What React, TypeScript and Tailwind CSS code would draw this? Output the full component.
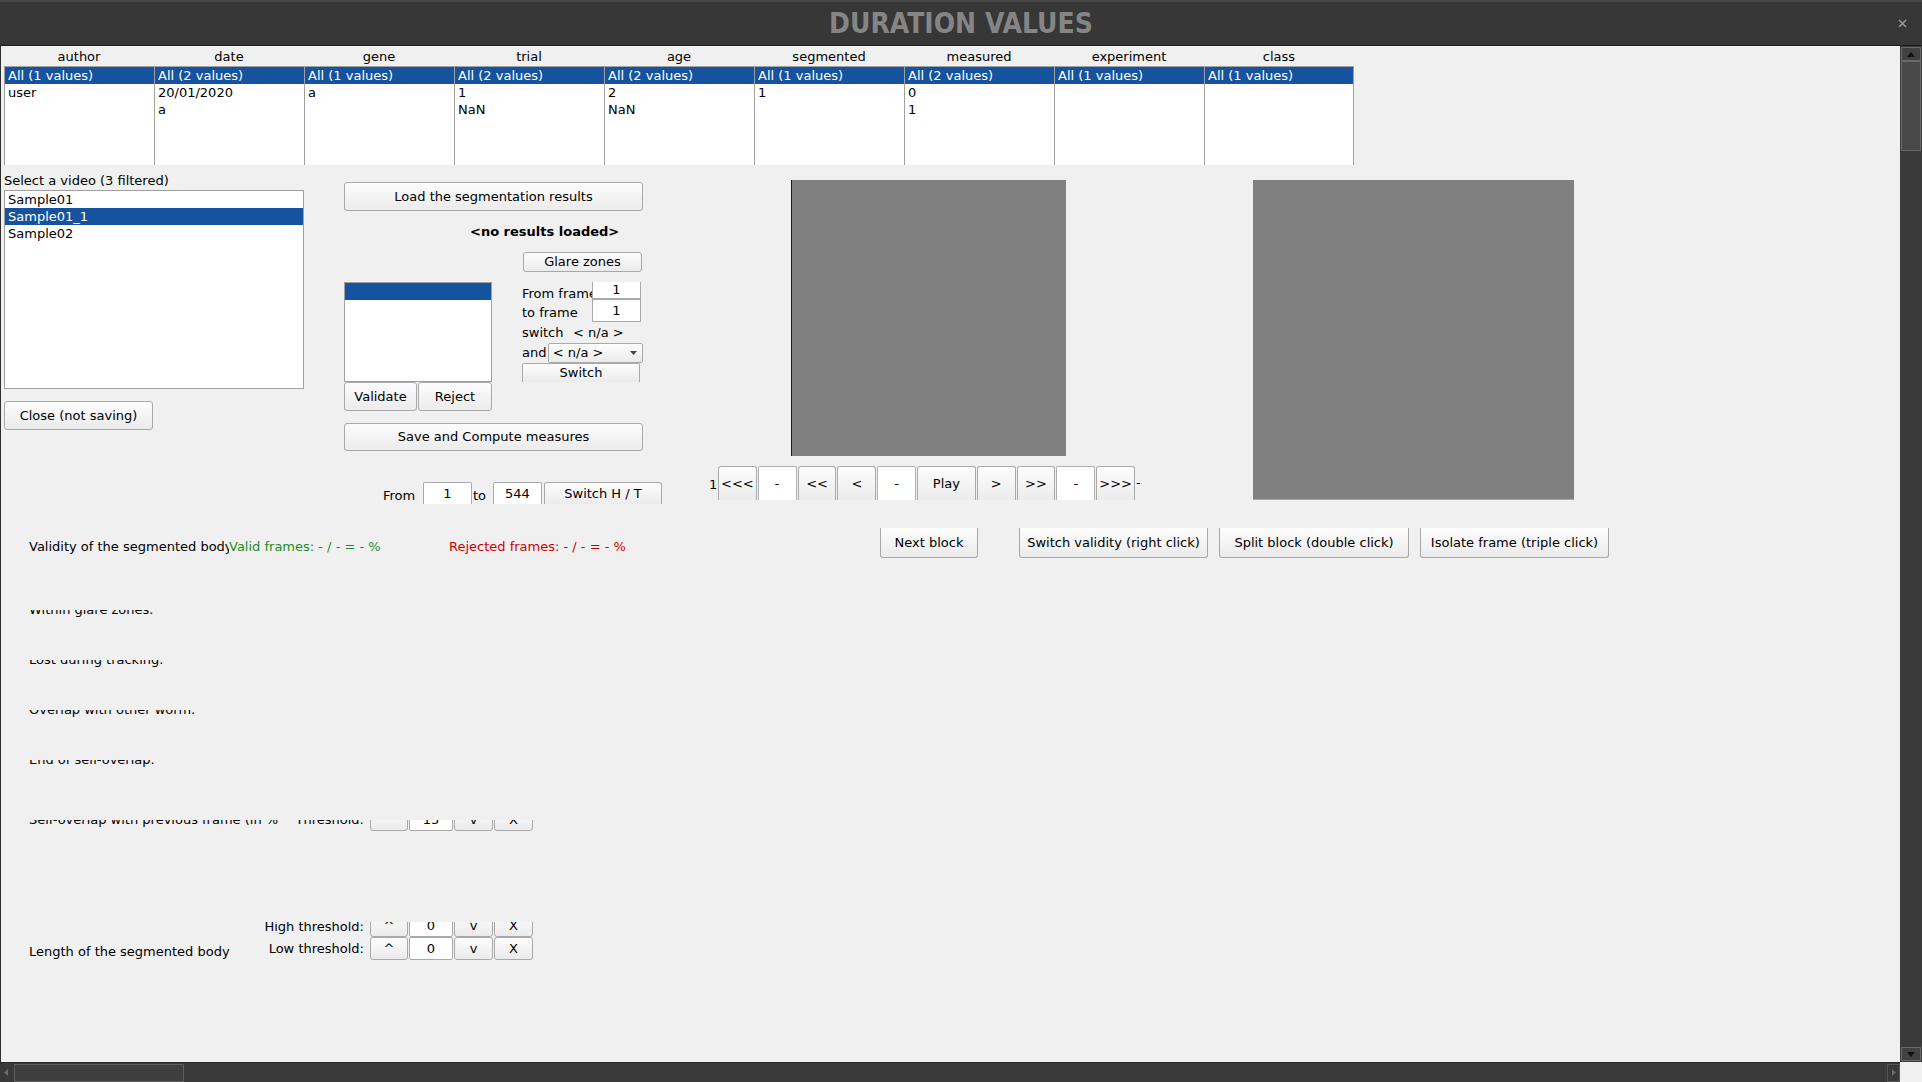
import React from "react";

const FACE = "flex items-center justify-center border-[#a9a9a9] bg-linear-to-b from-[#fdfdfd] to-[#ebebeb] text-black whitespace-nowrap";
const BTN = `${FACE} border`;

function Btn({ children, className = "" }: { children?: React.ReactNode; className?: string }) {
  return <div className={`${BTN} rounded-[3px] ${className}`}>{children}</div>;
}

function Field({ children, className = "" }: { children?: React.ReactNode; className?: string }) {
  return (
    <div className={`flex items-center justify-center bg-white border-[#a9a9a9] whitespace-nowrap ${className}`}>
      {children}
    </div>
  );
}

const cols = [
  { name: "author", n: 1, vals: ["user"] },
  { name: "date", n: 2, vals: ["20/01/2020", "a"] },
  { name: "gene", n: 1, vals: ["a"] },
  { name: "trial", n: 2, vals: ["1", "NaN"] },
  { name: "age", n: 2, vals: ["2", "NaN"] },
  { name: "segmented", n: 1, vals: ["1"] },
  { name: "measured", n: 2, vals: ["0", "1"] },
  { name: "experiment", n: 1, vals: [] as string[] },
  { name: "class", n: 1, vals: [] as string[] },
];

function TitleBar() {
  return (
    <div className="h-[46px] shrink-0 bg-[#373737] border-t-2 border-t-[#474747] border-b border-b-[#1c1c1c] flex items-center">
      <div className="w-[40px]" />
      <div className="flex-1 text-center font-['DejaVu_Sans_Condensed','Noto_Sans',sans-serif] font-bold text-[28px] leading-[30px] text-[#858585]">
        DURATION VALUES
      </div>
      <div className="w-[40px] flex items-center justify-center">
        <svg width="9" height="9" viewBox="0 0 9 9">
          <path d="M1 1L8 8M8 1L1 8" stroke="#9a9a9a" strokeWidth="1.5" />
        </svg>
      </div>
    </div>
  );
}

function FilterTable() {
  return (
    <div className="flex ml-[3px]">
      {cols.map((c, i) => (
        <div key={c.name} className="w-[150px] flex flex-col">
          <div className="h-[20px] leading-[20px] pt-[1px] text-center">{c.name}</div>
          <div
            className={`h-[99px] bg-white border-t border-l border-[#a0a0a0] ${
              i === cols.length - 1 ? "border-r" : ""
            }`}
          >
            <div className="h-[17px] leading-[17px] pl-[3px] bg-[#15539e] text-white whitespace-nowrap">
              All ({c.n} values)
            </div>
            {c.vals.map((v) => (
              <div key={v} className="h-[17px] leading-[17px] pl-[3px] whitespace-nowrap">
                {v}
              </div>
            ))}
          </div>
        </div>
      ))}
    </div>
  );
}

function NavBtn({ children, white = false, w = "w-[39px]" }: { children: React.ReactNode; white?: boolean; w?: string }) {
  return white ? (
    <div className={`${w} h-[34px] flex items-center justify-center bg-white border-x border-t border-[#b0b0b0] rounded-t-[2px]`}>
      {children}
    </div>
  ) : (
    <div className={`${FACE} border-x border-t ${w} h-[34px] rounded-t-[3px]`}>{children}</div>
  );
}

function SectionB() {
  return (
    <div className="flex items-start mt-[5px] shrink-0">
      {/* left column */}
      <div className="ml-[3px] w-[300px] flex flex-col">
        <div className="h-[20px] leading-[20px] pt-[1px] whitespace-nowrap">Select a video (3 filtered)</div>
        <div className="h-[199px] bg-white border border-[#a0a0a0]">
          <div className="h-[17px] leading-[17px] pl-[3px]">Sample01</div>
          <div className="h-[17px] leading-[17px] pl-[3px] bg-[#15539e] text-white">Sample01_1</div>
          <div className="h-[17px] leading-[17px] pl-[3px]">Sample02</div>
        </div>
        <Btn className="mt-[12px] w-[149px] h-[29px]">Close (not saving)</Btn>
      </div>

      {/* middle column */}
      <div className="ml-[40px] w-[319px] flex flex-col">
        <Btn className="mt-[12px] w-[299px] h-[29px]">Load the segmentation results</Btn>
        <div className="mt-[13px] h-[16px] leading-[16px] pl-[126px] font-bold whitespace-nowrap">
          &lt;no results loaded&gt;
        </div>
        <Btn className="mt-[12px] ml-[179px] w-[119px] h-[20px]">Glare zones</Btn>
        <div className="mt-[10px] flex items-start">
          <div className="w-[148px] flex flex-col">
            <div className="h-[100px] bg-white border border-[#a0a0a0]">
              <div className="h-[17px] bg-[#15539e]" />
            </div>
            <div className="flex h-[29px]">
              <Btn className="w-[73px] h-[29px]">Validate</Btn>
              <Btn className="ml-[1px] w-[74px] h-[29px]">Reject</Btn>
            </div>
          </div>
          <div className="ml-[30px] w-[121px] flex flex-col">
            <div className="h-[17px] flex items-center">
              <div className="w-[70px] overflow-hidden whitespace-nowrap leading-[17px] pt-[5px]">From frame</div>
              <Field className="w-[49px] h-[17px] border-x border-b">1</Field>
            </div>
            <div className="h-[23px] flex items-center">
              <div className="w-[70px] overflow-hidden whitespace-nowrap pt-[4px]">to frame</div>
              <Field className="w-[49px] h-[23px] border">1</Field>
            </div>
            <div className="h-[21px] flex items-center whitespace-nowrap">
              <div className="w-[51px]">switch</div>
              <div>&lt; n/a &gt;</div>
            </div>
            <div className="h-[20px] flex items-center whitespace-nowrap">
              <div className="w-[26px]">and</div>
              <div className="w-[96px] h-[20px] flex items-center justify-between pl-[4px] pr-[5px] border border-[#a9a9a9] rounded-[2px] bg-linear-to-b from-[#fdfdfd] to-[#ebebeb]">
                <span>&lt; n/a &gt;</span>
                <svg width="7" height="4" viewBox="0 0 7 4">
                  <path d="M0 0H7L3.5 4Z" fill="#444" />
                </svg>
              </div>
            </div>
            <div className={`${FACE} border-x border-t w-[118px] h-[19px] rounded-t-[2px]`}>Switch</div>
          </div>
        </div>
        <Btn className="mt-[12px] w-[299px] h-[28px]">Save and Compute measures</Btn>
        <div className="mt-[31px] h-[22px] flex items-start whitespace-nowrap">
          <div className="ml-[39px] w-[40px] pt-[6px] leading-[16px]">From</div>
          <Field className="w-[49px] h-[22px] border-x border-t rounded-t-[2px]">1</Field>
          <div className="w-[21px] pl-[1px] pt-[6px] leading-[16px]">to</div>
          <Field className="w-[49px] h-[22px] border-x border-t rounded-t-[2px]">544</Field>
          <div className={`${FACE} border-x border-t ml-[2px] w-[118px] h-[22px] rounded-t-[3px]`}>Switch H / T</div>
        </div>
      </div>

      {/* video column */}
      <div className="ml-[46px] w-[431px] flex flex-col">
        <div className="mt-[10px] ml-[82px] w-[275px] h-[276px] bg-[#808080] border-l border-[#1a1a1a]" />
        <div className="mt-[10px] h-[34px] flex items-center gap-[1px]">
          <div className="w-[8px] pt-[4px]">1</div>
          <NavBtn>&lt;&lt;&lt;</NavBtn>
          <NavBtn white>-</NavBtn>
          <NavBtn>&lt;&lt;</NavBtn>
          <NavBtn>&lt;</NavBtn>
          <NavBtn white>-</NavBtn>
          <NavBtn w="w-[59px]">Play</NavBtn>
          <NavBtn>&gt;</NavBtn>
          <NavBtn>&gt;&gt;</NavBtn>
          <NavBtn white>-</NavBtn>
          <NavBtn>&gt;&gt;&gt;</NavBtn>
          <div className="w-[4px] overflow-hidden">-</div>
        </div>
      </div>

      {/* right image */}
      <div className="ml-[113px] mt-[10px] w-[321px] h-[320px] bg-[#808080] border-b border-[#a8a8a8]" />
    </div>
  );
}

function SectionC() {
  const b = `${FACE} border-x border-b h-[30px] rounded-b-[3px]`;
  return (
    <div className="flex mt-[24px] h-[30px] shrink-0">
      <div className="w-[879px] flex pl-[28px] pt-[11px] leading-[16px] whitespace-nowrap">
        <div className="w-[200px] overflow-hidden">Validity of the segmented body</div>
        <div className="w-[220px] text-[#1f8c1f]">Valid frames: - / - = - %</div>
        <div className="text-[#cc0000]">Rejected frames: - / - = - %</div>
      </div>
      <div className={`${b} w-[98px]`}>Next block</div>
      <div className={`${b} ml-[41px] w-[189px]`}>Switch validity (right click)</div>
      <div className={`${b} ml-[11px] w-[190px]`}>Split block (double click)</div>
      <div className={`${b} ml-[11px] w-[189px]`}>Isolate frame (triple click)</div>
    </div>
  );
}

function ClippedLine({ text, mt }: { text: string; mt: string }) {
  return (
    <div className={`${mt} h-[7px] overflow-hidden shrink-0 pl-[28px]`}>
      <div className="-mt-[8px] leading-[15px] whitespace-nowrap">{text}</div>
    </div>
  );
}

function ThresholdButtons({ value }: { value: string }) {
  return (
    <div className="flex h-[23px]">
      <Btn className="w-[38px] h-[23px]">^</Btn>
      <Field className="ml-[1px] w-[44px] h-[23px] border rounded-[2px]">{value}</Field>
      <Btn className="ml-[1px] w-[39px] h-[23px]">v</Btn>
      <Btn className="ml-[1px] w-[39px] h-[23px]">X</Btn>
    </div>
  );
}

function SectionD() {
  return (
    <div className="flex flex-col shrink-0">
      <ClippedLine mt="mt-[52px]" text="Within glare zones." />
      <ClippedLine mt="mt-[43px]" text="Lost during tracking." />
      <ClippedLine mt="mt-[43px]" text="Overlap with other worm." />
      <ClippedLine mt="mt-[43px]" text="End of self-overlap." />
      <div className="mt-[53px] h-[11px] overflow-hidden">
        <div className="-mt-[12px] h-[23px] flex items-center pl-[28px] whitespace-nowrap">
          <div className="w-[250px] overflow-hidden">Self-overlap with previous frame (in %)</div>
          <div className="w-[85px] text-right">Threshold:</div>
          <div className="ml-[6px]">
            <ThresholdButtons value="15" />
          </div>
        </div>
      </div>
    </div>
  );
}

function SectionE() {
  return (
    <div className="mt-[91px] flex items-start shrink-0">
      <div className="ml-[28px] w-[194px] mt-[22px] leading-[16px] whitespace-nowrap">Length of the segmented body</div>
      <div className="flex flex-col">
        <div className="h-[15px] overflow-hidden">
          <div className="-mt-[8px] h-[23px] flex items-center whitespace-nowrap">
            <div className="w-[141px] text-right pt-[2px]">High threshold:</div>
            <div className="ml-[6px]">
              <ThresholdButtons value="0" />
            </div>
          </div>
        </div>
        <div className="h-[23px] flex items-center whitespace-nowrap">
          <div className="w-[141px] text-right pt-[1px]">Low threshold:</div>
          <div className="ml-[6px]">
            <ThresholdButtons value="0" />
          </div>
        </div>
      </div>
    </div>
  );
}

function VScroll() {
  return (
    <div className="w-[22px] h-full bg-[#3a3a3a] flex flex-col items-center pt-[1px] pb-[1px]">
      <div className="w-[20px] h-[14px] border border-[#6a6a6a] bg-[#424242] flex items-center justify-center">
        <svg width="8" height="5" viewBox="0 0 8 5">
          <path d="M0 5L4 0L8 5Z" fill="#111" />
        </svg>
      </div>
      <div className="w-[20px] h-[90px] border border-[#6a6a6a] bg-[#484848]" />
      <div className="flex-1" />
      <div className="w-[20px] h-[14px] border border-[#6a6a6a] bg-[#424242] flex items-center justify-center">
        <svg width="8" height="5" viewBox="0 0 8 5">
          <path d="M0 0L4 5L8 0Z" fill="#111" />
        </svg>
      </div>
    </div>
  );
}

function HScroll() {
  return (
    <div className="h-[20px] flex shrink-0">
      <div className="w-[1900px] h-full bg-[#393939] border-t border-[#262626] flex items-center">
        <div className="w-[12px] h-full flex items-center justify-center">
          <svg width="4" height="7" viewBox="0 0 4 7">
            <path d="M4 0L0 3.5L4 7Z" fill="#6a6a6a" />
          </svg>
        </div>
        <div className="ml-[2px] w-[170px] h-[18px] border border-[#5e5e5e] bg-[#3e3e3e]" />
        <div className="flex-1" />
        <div className="w-[13px] h-[18px] border border-[#555555] flex items-center justify-center">
          <svg width="4" height="7" viewBox="0 0 4 7">
            <path d="M0 0L4 3.5L0 7Z" fill="#6a6a6a" />
          </svg>
        </div>
      </div>
      <div className="w-[22px] h-full bg-[#f0f0f0]" />
    </div>
  );
}

export default function App() {
  return (
    <div className="w-[1922px] h-[1082px] flex flex-col bg-[#f0f0f0] overflow-hidden text-[13px] text-black font-['DejaVu_Sans',sans-serif]">
      <TitleBar />
      <div className="flex h-[1016px] shrink-0">
        <div className="w-[1900px] h-full border-l border-[#2e2e2e] overflow-hidden flex flex-col">
          <FilterTable />
          <SectionB />
          <SectionC />
          <SectionD />
          <SectionE />
        </div>
        <VScroll />
      </div>
      <HScroll />
    </div>
  );
}
